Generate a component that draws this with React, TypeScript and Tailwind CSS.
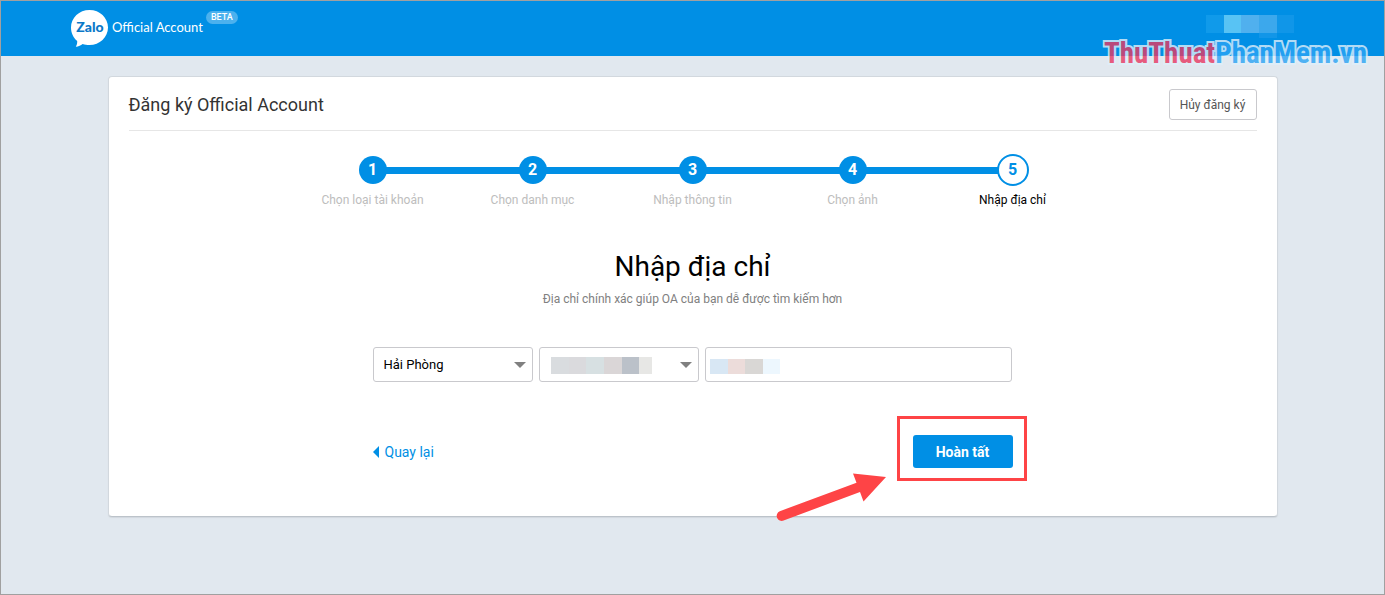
import React from "react";

const steps = [
  "Chọn loại tài khoản",
  "Chọn danh mục",
  "Nhập thông tin",
  "Chọn ảnh",
  "Nhập địa chỉ",
];

function Logo() {
  return (
    <a href="#" className="flex items-start text-white">
      <span className="relative flex h-10 w-[38px] shrink-0 justify-center">
        <svg viewBox="0 0 38 40" className="absolute inset-0 h-full w-full" aria-hidden="true">
          <path
            d="M18.5 1C8.300 1 0 8.700 0 18.500C0 24 2.300 28.800 6.200 32C6.300 34 6 36 4.800 37.700C7.600 37.500 9.900 36.600 11.600 35C13.800 35.800 16.100 36 18.500 36C28.700 36 37 28.300 37 18.500C37 8.700 28.700 1 18.500 1Z"
            fill="#ffffff"
          />
        </svg>
        <span className="relative mt-2 font-['Lato'] text-sm leading-5 font-black text-[#0a78c8]">Zalo</span>
      </span>
      <span className="mt-2 ml-[3px] font-['Lato',sans-serif] text-[13px] leading-5">Official Account</span>
      <span className="mt-[2px] ml-[3px] rounded-full bg-[#4bb1ee] px-[5px] text-[9px] leading-[13px] font-medium">BETA</span>
    </a>
  );
}

function UserName() {
  return (
    <div className="mt-[6px] flex h-[18px] w-[88px]" aria-hidden="true">
      <span className="w-[18px] bg-[#109aea]" />
      <span className="w-[17px] bg-[#58c3f4]" />
      <span className="w-[18px] bg-[#50b0ee]" />
      <span className="h-[23px] w-[18px] bg-gradient-to-b from-[#3ca8ec] from-80% to-[#1296e8] to-80%" />
      <span className="w-[17px] bg-[#1096e8]" />
    </div>
  );
}

function Steps() {
  return (
    <ol className="mx-auto mt-[23px] grid max-w-[800px] grid-cols-5">
      {steps.map((label, i) => {
        const current = i === steps.length - 1;
        return (
          <li key={label} className="text-center" aria-current={current ? "step" : undefined}>
            <div className="flex h-8 items-center">
              <span className={i === 0 ? "flex-1" : "h-[7px] flex-1 bg-[#008fe5]"} />
              <span
                className={
                  current
                    ? "-mx-px flex h-8 w-8 items-center justify-center rounded-full border-2 border-[#008fe5] bg-white text-base font-bold text-[#008fe5]"
                    : "-mx-px flex h-7 w-7 items-center justify-center rounded-full bg-[#008fe5] text-base font-bold text-white"
                }
              >
                {i + 1}
              </span>
              <span className={current ? "flex-1" : "h-[7px] flex-1 bg-[#008fe5]"} />
            </div>
            <div className={current ? "mt-1 text-xs leading-5 text-black" : "mt-1 text-xs leading-5 text-[#bdbdbd]"}>
              {label}
            </div>
          </li>
        );
      })}
    </ol>
  );
}

function SelectBox({ label, children, cover }: { label: string; children: React.ReactNode; cover?: React.ReactNode }) {
  return (
    <div className="relative flex-[160]">
      <select
        aria-label={label}
        className="h-[35px] w-full appearance-none rounded-[3px] border border-[#c9c9cd] bg-white px-[10px] text-[13px] text-black"
      >
        {children}
      </select>
      {cover}
      <svg
        viewBox="0 0 12 6"
        className="pointer-events-none absolute top-[15px] right-[7px] h-[6px] w-3"
        aria-hidden="true"
      >
        <path d="M0 0H12L6 6Z" fill="#808080" />
      </svg>
    </div>
  );
}

function AddressForm() {
  return (
    <form className="mx-auto max-w-[640px]" onSubmit={(e) => e.preventDefault()}>
      <div className="mt-[38px] flex gap-[6px]">
        <SelectBox label="Tỉnh / Thành phố">
          <option>Hải Phòng</option>
        </SelectBox>
        <SelectBox
          label="Quận / Huyện"
          cover={
            <span className="pointer-events-none absolute top-[10px] left-3 flex h-[17px] w-[101px]" aria-hidden="true">
              <span className="w-[18px] bg-[#d9dcdf]" />
              <span className="w-[17px] bg-[#dadadd]" />
              <span className="w-[18px] bg-[#d7e0e2]" />
              <span className="w-[18px] bg-[#dad6d7]" />
              <span className="w-[17px] bg-[#bbc1c9]" />
              <span className="w-[13px] bg-[#e7e7e5]" />
            </span>
          }
        >
          <option />
        </SelectBox>
        <div className="relative flex-[307]">
          <input
            aria-label="Địa chỉ"
            type="text"
            className="h-[35px] w-full rounded-[3px] border border-[#c9c9cd] bg-white px-[10px] text-[13px] text-black"
          />
          <span className="pointer-events-none absolute top-3 left-[5px] flex h-[15px] w-[70px]" aria-hidden="true">
            <span className="w-[18px] bg-[#d8e7f4]" />
            <span className="w-[17px] bg-[#ecdcda]" />
            <span className="w-[18px] bg-[#d9d7d5]" />
            <span className="w-[17px] bg-[#edf7fe]" />
          </span>
        </div>
      </div>
      <div className="mt-[53px] flex items-center justify-between">
        <a href="#" className="flex items-center gap-[6px] text-sm leading-5 text-[#008fe5]">
          <svg viewBox="0 0 6 12" className="h-3 w-[6px]" aria-hidden="true">
            <path d="M6 0V12L0 6Z" fill="currentColor" />
          </svg>
          Quay lại
        </a>
        <div className="relative">
          <button type="submit" className="block h-[33px] w-[100px] rounded-[3px] bg-[#008fe5] text-sm font-bold text-white">
            Hoàn tất
          </button>
          <span className="pointer-events-none absolute -top-[19px] -right-[14px] h-[65px] w-[130px] border-3 border-[#fe4446]" />
          <svg
            viewBox="0 0 110 50"
            className="pointer-events-none absolute top-[38px] right-[127px] h-[50px] w-[110px]"
            aria-hidden="true"
          >
            <path
              d="M110 4L77 0.500L80.500 9.800L3.800 38.200A5 5 0 0 0 7.600 47.500L84 19L87.500 28.500Z"
              fill="#fe4446"
            />
          </svg>
        </div>
      </div>
    </form>
  );
}

export default function App() {
  return (
    <div className="min-h-screen border border-[#a0a0a0] bg-[#e1e8ef] font-['Roboto',sans-serif]">
      <header className="relative flex h-[55px] items-start justify-between bg-[#008fe5] py-2 pr-[90px] pl-[70px]">
        <Logo />
        <UserName />
        <span className="pointer-events-none absolute top-[34px] right-[17px] font-['Roboto_Condensed','Roboto',sans-serif] text-[29px] leading-9 font-bold whitespace-nowrap opacity-80 [-webkit-text-stroke:4px_#dfeffa] [paint-order:stroke_fill]">
          <span className="text-[#e83862]">ThuThuat</span>
          <span className="text-[#2ba4f4]">PhanMem.vn</span>
        </span>
      </header>
      <main className="mx-auto mt-5 max-w-[1170px] rounded-[4px] border border-[#d2d8de] border-b-[#bcc3ca] bg-white px-5 pb-12 shadow-[0_1px_1px_#d2d8de]">
        <div className="flex items-center justify-between border-b border-[#e6e6e6] pt-3 pb-[10px]">
          <h1 className="text-lg leading-6 text-[#333333]">Đăng ký Official Account</h1>
          <button
            type="button"
            className="h-[31px] w-[88px] rounded-[3px] border border-[#c9c9cd] bg-white text-xs whitespace-nowrap text-[#555555]"
          >
            Hủy đăng ký
          </button>
        </div>
        <Steps />
        <h2 className="mt-[37px] text-center text-[28px] leading-10 text-black">Nhập địa chỉ</h2>
        <p className="mt-[2px] text-center text-xs leading-5 text-[#808080]">Địa chỉ chính xác giúp OA của bạn dễ được tìm kiếm hơn</p>
        <AddressForm />
      </main>
    </div>
  );
}
